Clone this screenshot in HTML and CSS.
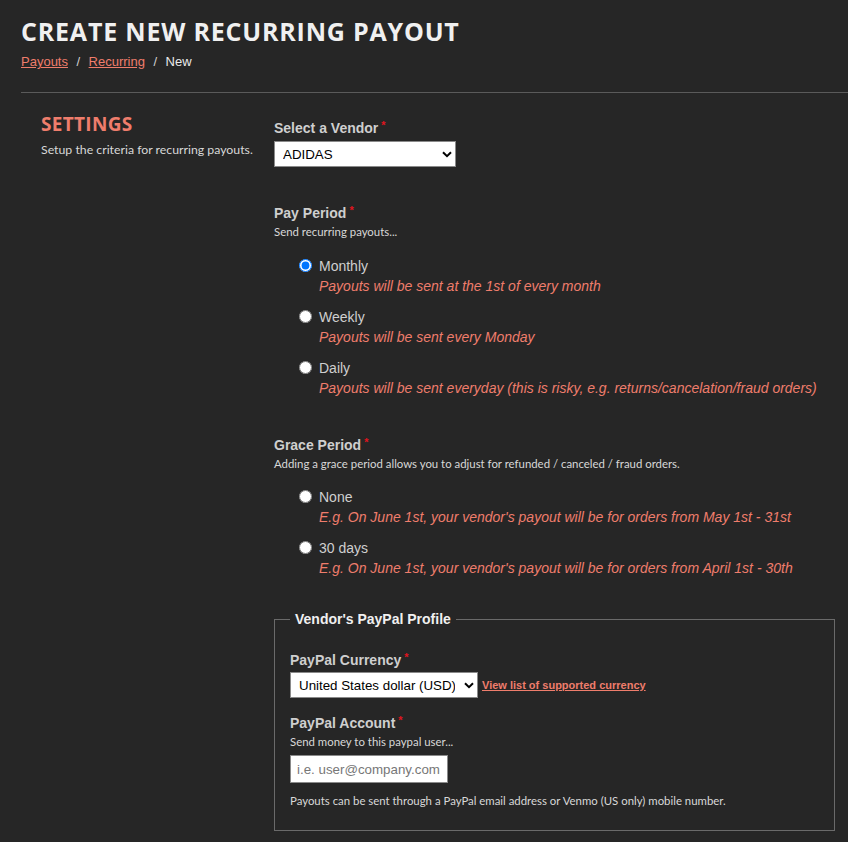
FILE: index.html
```html
<!DOCTYPE html>
<html>
<head>
<meta charset="utf-8">
<link rel="stylesheet" href="styles.css">
</head>
<body>
<div class="page">
  <h1 class="title">CREATE NEW RECURRING PAYOUT</h1>
  <nav class="crumbs"><a href="#">Payouts</a><span class="sep">/</span><a href="#">Recurring</a><span class="sep">/</span><span class="cur">New</span></nav>
  <hr class="rule">
  <div class="section">
    <div class="side">
      <h2 class="side-title">SETTINGS</h2>
      <p class="side-desc">Setup the criteria for recurring payouts.</p>
    </div>
    <div class="main">
      <div class="field">
        <label class="lbl">Select a Vendor<span class="req">*</span></label>
        <div class="sel-wrap vendor">
          <select class="sel"><option>ADIDAS</option></select>
          <svg class="chev" width="10" height="7" viewBox="0 0 10 7"><path d="M1 1.2 L5 5.2 L9 1.2" fill="none" stroke="#000" stroke-width="2"/></svg>
        </div>
      </div>

      <div class="field pay">
        <label class="lbl">Pay Period<span class="req">*</span></label>
        <p class="help">Send recurring payouts...</p>
        <div class="opts">
          <div class="opt">
            <input type="radio" name="pp" checked>
            <div class="opt-text"><span class="opt-lbl">Monthly</span><span class="opt-desc">Payouts will be sent at the 1st of every month</span></div>
          </div>
          <div class="opt">
            <input type="radio" name="pp">
            <div class="opt-text"><span class="opt-lbl">Weekly</span><span class="opt-desc">Payouts will be sent every Monday</span></div>
          </div>
          <div class="opt">
            <input type="radio" name="pp">
            <div class="opt-text"><span class="opt-lbl">Daily</span><span class="opt-desc">Payouts will be sent everyday (this is risky, e.g. returns/cancelation/fraud orders)</span></div>
          </div>
        </div>
      </div>

      <div class="field grace">
        <label class="lbl">Grace Period<span class="req">*</span></label>
        <p class="help">Adding a grace period allows you to adjust for refunded / canceled / fraud orders.</p>
        <div class="opts grace-opts">
          <div class="opt">
            <input type="radio" name="gp">
            <div class="opt-text"><span class="opt-lbl">None</span><span class="opt-desc">E.g. On June 1st, your vendor's payout will be for orders from May 1st - 31st</span></div>
          </div>
          <div class="opt">
            <input type="radio" name="gp">
            <div class="opt-text"><span class="opt-lbl">30 days</span><span class="opt-desc">E.g. On June 1st, your vendor's payout will be for orders from April 1st - 30th</span></div>
          </div>
        </div>
      </div>

      <fieldset class="box">
        <legend class="legend">Vendor's PayPal Profile</legend>
        <div class="field cur-field">
          <label class="lbl">PayPal Currency<span class="req">*</span></label>
          <div class="row">
            <div class="sel-wrap currency">
              <select class="sel"><option>United States dollar (USD)</option></select>
              <svg class="chev" width="10" height="7" viewBox="0 0 10 7"><path d="M1 1.2 L5 5.2 L9 1.2" fill="none" stroke="#000" stroke-width="2"/></svg>
            </div>
            <a href="#" class="list-link">View list of supported currency</a>
          </div>
        </div>
        <div class="field acct">
          <label class="lbl">PayPal Account<span class="req">*</span></label>
          <p class="help">Send money to this paypal user...</p>
          <input class="txt" type="text" placeholder="i.e. user@company.com">
          <p class="note">Payouts can be sent through a PayPal email address or Venmo (US only) mobile number.</p>
        </div>
      </fieldset>
    </div>
  </div>
</div>
</body>
</html>
```

FILE: styles.css
```css
html, body {
  margin: 0;
  padding: 0;
  background: #262626;
}
body {
  font-family: "Liberation Sans", Arial, sans-serif;
  color: #d4d4d4;
}
.page {
  padding: 14px 0 0 21px;
}
.title {
  margin: 0;
  font-family: "Open Sans", sans-serif;
  font-weight: 700;
  font-size: 25px;
  line-height: 34px;
  letter-spacing: 0.8px;
  color: #f0f0f0;
}
.crumbs {
  margin-top: 6px;
  font-size: 13px;
  line-height: 16px;
  color: #e0e0e0;
}
.crumbs a {
  color: #ef7d6c;
  text-decoration: underline;
}
.crumbs .sep {
  margin: 0 8.5px;
  color: #d0d0d0;
}
.crumbs .cur {
  color: #eaeaea;
}
.rule {
  margin: 22px 0 0 0;
  border: 0;
  border-top: 1px solid #5a5a5a;
  height: 0;
}
.section {
  display: flex;
  padding: 20px 0 0 20px;
}
.side {
  width: 233px;
  flex: none;
}
.side-title {
  margin: 0;
  font-family: "Open Sans", sans-serif;
  font-weight: 700;
  font-size: 19px;
  line-height: 22px;
  letter-spacing: 0.3px;
  color: #ef7d6c;
}
.side-desc {
  margin: 7px 0 0 0;
  font-family: "Lato", sans-serif;
  font-size: 12.3px;
  line-height: 16px;
  color: #d8d8d8;
}
.main {
  flex: 1;
  padding-right: 13px;
  padding-top: 6px;
}
.field {
  display: flex;
  flex-direction: column;
  align-items: flex-start;
}
.lbl {
  font-weight: 700;
  font-size: 14px;
  line-height: 18px;
  color: #cfcfcf;
}
.req {
  color: #e0141e;
  font-size: 11px;
  vertical-align: top;
  margin-left: 3px;
  line-height: 12px;
}
.sel-wrap {
  position: relative;
  display: flex;
}
.sel {
  -webkit-appearance: none;
  appearance: none;
  width: 100%;
  font-family: "Liberation Sans", Arial, sans-serif;
  font-size: 13.333px;
  color: #000;
  background: #fff;
  border: 1px solid #8a8a8a;
  border-radius: 0;
  height: 26px;
  padding: 0 22px 0 8px;
  margin: 0;
}
.chev {
  position: absolute;
  right: 4px;
  top: 10px;
  pointer-events: none;
}
.vendor {
  margin-top: 4px;
  width: 182px;
}
.help {
  margin: 3px 0 0 0;
  font-family: "Lato", sans-serif;
  font-size: 11.4px;
  line-height: 14px;
  color: #d8d8d8;
}
.pay {
  margin-top: 37px;
}
.grace {
  margin-top: 37px;
}
.opts {
  display: flex;
  flex-direction: column;
  gap: 10px;
  padding: 17px 0 0 25px;
}
.grace-opts {
  padding-top: 16px;
}
.opt {
  display: flex;
  align-items: flex-start;
  gap: 7px;
}
.opt input {
  margin: 3px 0 0 0;
  width: 13px;
  height: 13px;
  flex: none;
}
.opt-text {
  display: flex;
  flex-direction: column;
}
.opt-lbl {
  font-size: 14px;
  line-height: 20px;
  color: #cfcfcf;
}
.opt-desc {
  font-size: 14px;
  line-height: 21px;
  font-style: italic;
  color: #ef7d6c;
}
.box {
  margin: 32px 0 0 0;
  border: 1px solid #6a6a6a;
  padding: 24px 15px 22px 15px;
}
.legend {
  padding: 0 5px;
  margin-left: 0;
  font-weight: 700;
  font-size: 14px;
  color: #f0f0f0;
}
.row {
  display: flex;
  align-items: center;
  gap: 4px;
  margin-top: 3px;
}
.currency {
  width: 188px;
}
.list-link {
  font-size: 11px;
  font-weight: 700;
  color: #ef7d6c;
  text-decoration: underline;
}
.acct {
  margin-top: 16px;
}
.txt {
  margin-top: 6px;
  width: 158px;
  height: 28px;
  box-sizing: border-box;
  border: 1px solid #8a8a8a;
  border-radius: 0;
  padding: 0 6px;
  font-family: "Liberation Sans", Arial, sans-serif;
  font-size: 13.333px;
  background: #fff;
}
.txt::placeholder {
  color: #777;
}
.note {
  margin: 11px 0 0 0;
  font-family: "Lato", sans-serif;
  font-size: 11.4px;
  line-height: 14px;
  color: #d8d8d8;
}
```
